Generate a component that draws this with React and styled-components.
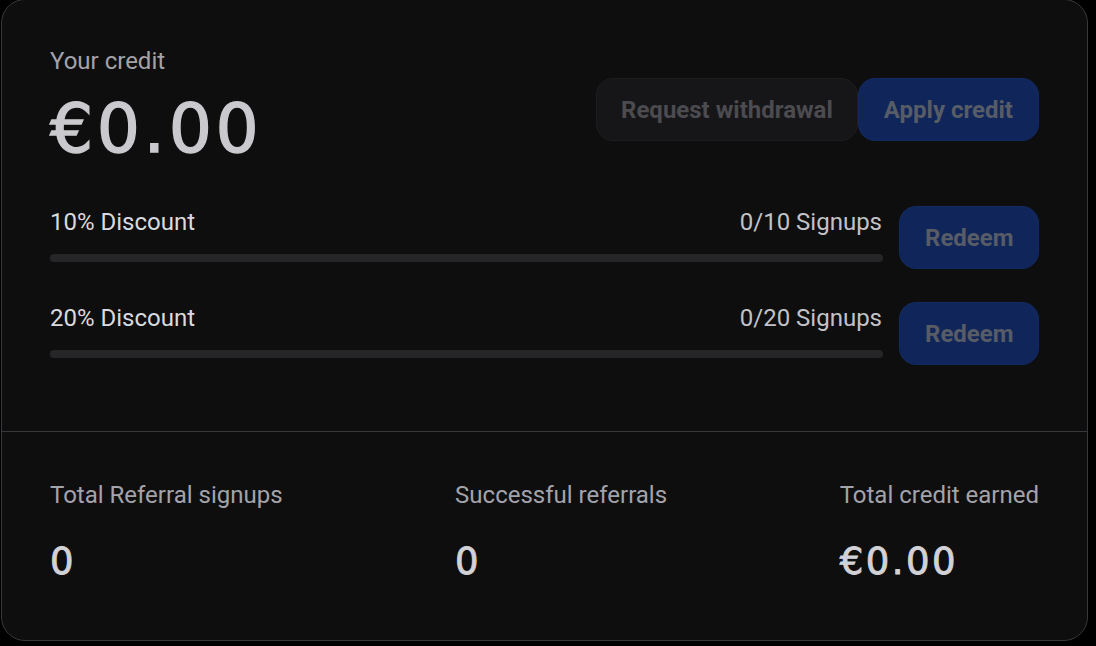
import React from "react";
import styled, { createGlobalStyle } from "styled-components";

const Global = createGlobalStyle`
  html, body {
    margin: 0;
    padding: 0;
    background: #000;
    overflow: hidden;
  }
  body {
    font-family: Roboto, "Liberation Sans", sans-serif;
  }
  * { box-sizing: border-box; }
`;

const Card = styled.section`
  margin: -1px 0 0 1px;
  width: 1087px;
  height: 642px;
  background: #0e0e0f;
  border: 1px solid #38383d;
  border-radius: 24px;
  display: flex;
  flex-direction: column;
`;

const Top = styled.div`
  padding: 48px 48px 66px;
  display: flex;
  flex-direction: column;
  gap: 37px;
`;

const Header = styled.div`
  display: flex;
  justify-content: space-between;
  align-items: flex-start;
`;

const CreditBlock = styled.div`
  display: flex;
  flex-direction: column;
`;

const Label = styled.div`
  font-size: 24px;
  line-height: 26px;
  color: #a3a3ab;
`;

const BigAmount = styled.div`
  margin-top: 15px;
  font-family: "DejaVu Sans", Verdana, sans-serif;
  font-size: 68px;
  line-height: 80px;
  letter-spacing: 3.5px;
  color: #cacace;
  -webkit-text-stroke: 1.4px #cacace;
`;

const Actions = styled.div`
  margin-top: 30px;
  display: flex;
  gap: 0;
`;

const Button = styled.button`
  height: 63px;
  padding: 0 ${(p) => p.$pad || "25px"};
  border-radius: 17px;
  border: 1px solid ${(p) => (p.$primary ? "#132a60" : "#1d1d20")};
  background: ${(p) => (p.$primary ? "#10265a" : "#161618")};
  color: ${(p) => (p.$primary ? "#575c66" : "#4b4b50")};
  font-family: Roboto, "Liberation Sans", sans-serif;
  font-weight: 700;
  font-size: 24px;
  white-space: nowrap;
  cursor: default;
  width: ${(p) => p.$w || "auto"};
`;

const Rows = styled.div`
  display: flex;
  flex-direction: column;
  gap: 33px;
`;

const Row = styled.div`
  display: flex;
  gap: 16px;
  align-items: stretch;
`;

const Progress = styled.div`
  flex: 1;
  padding-top: 2px;
  display: flex;
  flex-direction: column;
`;

const ProgressHead = styled.div`
  display: flex;
  justify-content: space-between;
  font-size: 24px;
  line-height: 28px;
`;

const Name = styled.span`
  color: #dadade;
`;

const Count = styled.span`
  color: #c2c2c8;
  padding-right: 1px;
`;

const Track = styled.div`
  margin-top: 18px;
  height: 8px;
  border-radius: 4px;
  background: #262628;
  overflow: hidden;
`;

const Fill = styled.div`
  height: 100%;
  background: #2b5bd7;
  border-radius: 4px;
`;

const Stats = styled.div`
  border-top: 1px solid #38383d;
  padding: 49px 48px 0;
  display: flex;
  justify-content: space-between;
`;

const Stat = styled.div`
  display: flex;
  flex-direction: column;
`;

const StatLabel = styled.div`
  font-size: 24px;
  line-height: 28px;
  color: #a3a3ab;
`;

const StatValue = styled.div`
  margin-top: 31px;
  font-family: "DejaVu Sans", Verdana, sans-serif;
  font-size: 37px;
  line-height: 44px;
  letter-spacing: 2.5px;
  color: #d2d2d6;
  -webkit-text-stroke: 0.9px #d2d2d6;
`;

const tiers = [
  { name: "10% Discount", done: 0, goal: 10 },
  { name: "20% Discount", done: 0, goal: 20 },
];

const stats = [
  { label: "Total Referral signups", value: "0" },
  { label: "Successful referrals", value: "0" },
  { label: "Total credit earned", value: "€0.00" },
];

export default function App() {
  return (
    <>
      <Global />
      <Card>
        <Top>
          <Header>
            <CreditBlock>
              <Label>Your credit</Label>
              <BigAmount>€0.00</BigAmount>
            </CreditBlock>
            <Actions>
              <Button $pad="24px">Request withdrawal</Button>
              <Button $primary>Apply credit</Button>
            </Actions>
          </Header>
          <Rows>
            {tiers.map((t) => (
              <Row key={t.name}>
                <Progress>
                  <ProgressHead>
                    <Name>{t.name}</Name>
                    <Count>
                      {t.done}/{t.goal} Signups
                    </Count>
                  </ProgressHead>
                  <Track>
                    <Fill style={{ width: `${(t.done / t.goal) * 100}%` }} />
                  </Track>
                </Progress>
                <Button $primary $w="140px">
                  Redeem
                </Button>
              </Row>
            ))}
          </Rows>
        </Top>
        <Stats>
          {stats.map((s) => (
            <Stat key={s.label}>
              <StatLabel>{s.label}</StatLabel>
              <StatValue>{s.value}</StatValue>
            </Stat>
          ))}
        </Stats>
      </Card>
    </>
  );
}
